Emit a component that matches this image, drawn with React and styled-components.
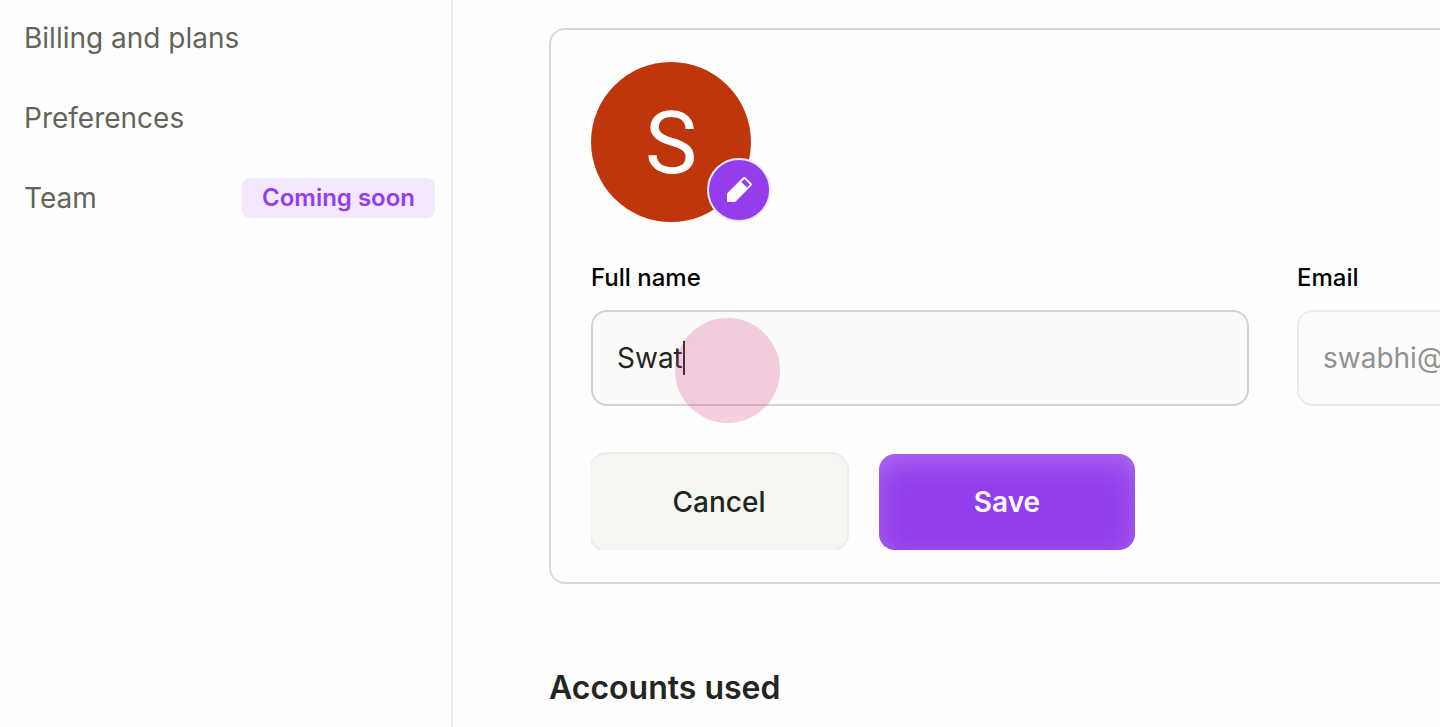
import styled, { createGlobalStyle } from "styled-components";

const GlobalStyle = createGlobalStyle`
  * {
    box-sizing: border-box;
  }

  body {
    margin: 0;
    background: #fefefe;
    color: #23251f;
    font-family: Inter, "Liberation Sans", sans-serif;
    overflow: hidden;
  }

  button,
  input {
    font-family: inherit;
  }
`;

const Page = styled.div`
  display: flex;
  min-height: 100vh;
`;

const Sidebar = styled.nav`
  flex: 0 0 453px;
  display: flex;
  flex-direction: column;
  gap: 40px;
  padding: 18px 16px 0 24px;
  border-right: 2px solid #ecece6;
`;

const NavRow = styled.div`
  display: flex;
  align-items: center;
  justify-content: space-between;
`;

const NavLink = styled.a`
  font-size: 28px;
  line-height: 40px;
  color: #62645b;
  text-decoration: none;
`;

const Badge = styled.span`
  padding: 0 20px;
  border-radius: 8px;
  background: #f3e8fd;
  color: #933dec;
  font-size: 24px;
  font-weight: 600;
  line-height: 40px;
`;

const Main = styled.main`
  flex: 1;
  min-width: 0;
  padding: 28px 0 0 96px;
  overflow: hidden;
`;

const Card = styled.form`
  width: max-content;
  min-width: 100%;
  padding: 32px 40px;
  border: 2px solid #d9dad3;
  border-radius: 16px;
`;

const Avatar = styled.div`
  position: relative;
  display: flex;
  align-items: center;
  justify-content: center;
  width: 160px;
  height: 160px;
  border-radius: 50%;
  background: #bf360c;
  color: #fff;
  font-family: Roboto, sans-serif;
  font-size: 88px;
`;

const EditButton = styled.button`
  position: absolute;
  right: -20px;
  bottom: 0;
  display: flex;
  align-items: center;
  justify-content: center;
  width: 64px;
  height: 64px;
  padding: 0;
  border: 2px solid #e9e9ee;
  border-radius: 50%;
  background: #933dec;
  color: #fff;
`;

const Fields = styled.div`
  display: grid;
  grid-template-columns: repeat(2, minmax(658px, 1fr));
  gap: 48px;
  margin-top: 40px;
`;

const Field = styled.div`
  display: flex;
  flex-direction: column;
  gap: 16px;
`;

const Label = styled.label`
  color: #000;
  font-size: 24px;
  font-weight: 500;
  line-height: 32px;
`;

const InputWrap = styled.div`
  position: relative;
`;

const Input = styled.input`
  display: block;
  width: 100%;
  height: 96px;
  padding: 0 24px;
  border: 2px solid #d3d4d1;
  border-radius: 16px;
  background: #fafaf8;
  color: #23251f;
  caret-color: transparent;
  font-size: 28px;
  outline: none;

  &:disabled {
    border-color: #ecece6;
    background: #fcfcfc;
    color: #91928f;
  }
`;

const Caret = styled.span`
  position: absolute;
  top: 31px;
  left: 92px;
  width: 2px;
  height: 34px;
  background: #23251f;
`;

const TouchPoint = styled.span`
  position: absolute;
  top: 8px;
  left: 84px;
  width: 105px;
  height: 105px;
  border-radius: 50%;
  background: rgba(220, 64, 135, 0.25);
  pointer-events: none;
`;

const Actions = styled.div`
  display: flex;
  gap: 32px;
  margin-top: 46px;
  padding-top: 2px;
  overflow: hidden;
`;

const Button = styled.button`
  width: 256px;
  height: 96px;
  border: 0;
  border-radius: 16px;
  background: ${({ $primary }) => ($primary ? "#933dec" : "#f5f6f0")};
  color: ${({ $primary }) => ($primary ? "#fff" : "#23251f")};
  box-shadow: ${({ $primary }) =>
    $primary
      ? "inset 0 10px 28px rgba(255, 255, 255, 0.22)"
      : "0 0 0 2px #ecede7"};
  font-size: 28px;
  font-weight: ${({ $primary }) => ($primary ? 600 : 500)};
`;

const SectionTitle = styled.h2`
  margin: 84px 0 0;
  font-size: 32px;
  font-weight: 600;
  line-height: 40px;
`;

const PencilIcon = () => (
  <svg width="26" height="26" viewBox="0 0 26 26" aria-hidden="true">
    <path
      fill="currentColor"
      fillRule="evenodd"
      d="M1 17.6Q1 16.6 1.8 15.8L17 .5Q18.3 -.6 19.6 .5L25.4 6.2Q26.4 7.4 25.4 8.6L10 24.3Q9.2 25 8.2 25H2Q1 25 1 24ZM18.3 1.9L15.3 4.9L21 10.6L24 7.6Z"
    />
  </svg>
);

const navItems = [
  { label: "Billing and plans" },
  { label: "Preferences" },
  { label: "Team", badge: "Coming soon" },
];

const App = () => (
  <>
    <GlobalStyle />
    <Page>
      <Sidebar>
        {navItems.map(({ label, badge }) => (
          <NavRow key={label}>
            <NavLink href="#">{label}</NavLink>
            {badge && <Badge>{badge}</Badge>}
          </NavRow>
        ))}
      </Sidebar>
      <Main>
        <Card>
          <Avatar>
            S
            <EditButton type="button" aria-label="Edit photo">
              <PencilIcon />
            </EditButton>
          </Avatar>
          <Fields>
            <Field>
              <Label htmlFor="name">Full name</Label>
              <InputWrap>
                <Input id="name" defaultValue="Swat" />
                <Caret />
                <TouchPoint />
              </InputWrap>
            </Field>
            <Field>
              <Label htmlFor="email">Email</Label>
              <Input id="email" defaultValue="swabhi@" disabled />
            </Field>
          </Fields>
          <Actions>
            <Button type="button">Cancel</Button>
            <Button type="button" $primary>
              Save
            </Button>
          </Actions>
        </Card>
        <SectionTitle>Accounts used</SectionTitle>
      </Main>
    </Page>
  </>
);

export default App;
